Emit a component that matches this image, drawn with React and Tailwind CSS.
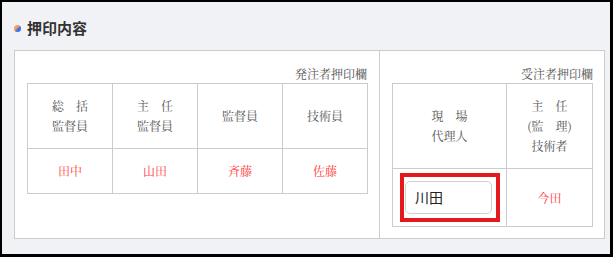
export default function App() {
  const serif = { fontFamily: '"Noto Serif CJK JP", "Liberation Serif", "Noto Sans CJK JP", serif' };
  const th = "border border-[#cccccc] text-center align-middle text-[12px] leading-[20px] text-[#555] font-normal p-0";
  const td = "border border-[#cccccc] text-center align-middle text-[12px] text-[#ff3c3c] p-0";
  return (
    <div className="w-[613px] h-[257px] border-l-2 border-t-2 border-r-[3px] border-b-[3px] border-black bg-[#f1f2f6] box-border overflow-hidden">
      <div className="flex items-center h-[48px] pl-[12px] pt-[4px]">
        <span className="w-[7px] h-[7px] rounded-full bg-[linear-gradient(135deg,#f7a050_0%,#f7a050_40%,#3f6ff2_60%,#3f6ff2_100%)]" />
        <span className="ml-[6px] text-[15px] font-bold text-[#333]" style={{ fontFamily: '"Noto Sans CJK JP", sans-serif' }}>押印内容</span>
      </div>
      <div className="ml-[12px] w-[591px] h-[189px] border border-[#cccccc] bg-white flex" style={serif}>
        <div className="w-[365px] border-r border-[#cccccc] pt-[13px] pl-[12px] pr-[12px]">
          <div className="text-right text-[12px] leading-[19px] text-[#555]">発注者押印欄</div>
          <table className="border-collapse w-[341px] table-fixed">
            <tbody>
              <tr className="h-[65px]">
                <th className={th}>総　括<br />監督員</th>
                <th className={th}>主　任<br />監督員</th>
                <th className={th}>監督員</th>
                <th className={th}>技術員</th>
              </tr>
              <tr className="h-[45px]">
                <td className={td}>田中</td>
                <td className={td}>山田</td>
                <td className={td}>斉藤</td>
                <td className={td}>佐藤</td>
              </tr>
            </tbody>
          </table>
        </div>
        <div className="flex-1 pt-[13px] pl-[12px] pr-[11px]">
          <div className="text-right text-[12px] leading-[19px] text-[#555]">受注者押印欄</div>
          <table className="border-collapse w-[200px] table-fixed">
            <colgroup>
              <col className="w-[114px]" />
              <col className="w-[86px]" />
            </colgroup>
            <tbody>
              <tr className="h-[85px]">
                <th className={th}>現　場<br />代理人</th>
                <th className={th}>主　任<br />(監　理)<br />技術者</th>
              </tr>
              <tr className="h-[58px]">
                <td className="border border-[#cccccc] p-0 align-middle">
                  <div className="relative ml-[12px] w-[87px] h-[33px]">
                    <div className="w-full h-full border border-[#cfcfcf] rounded-[5px] flex items-center pl-[9px] text-[14px] text-[#222]" style={{ fontFamily: '"Noto Sans CJK JP", sans-serif' }}>川田</div>
                    <div className="absolute left-[-5px] top-[-8px] w-[100px] h-[49px] border-[4px] border-[#e3191c]" />
                  </div>
                </td>
                <td className={td}>今田</td>
              </tr>
            </tbody>
          </table>
        </div>
      </div>
    </div>
  );
}
